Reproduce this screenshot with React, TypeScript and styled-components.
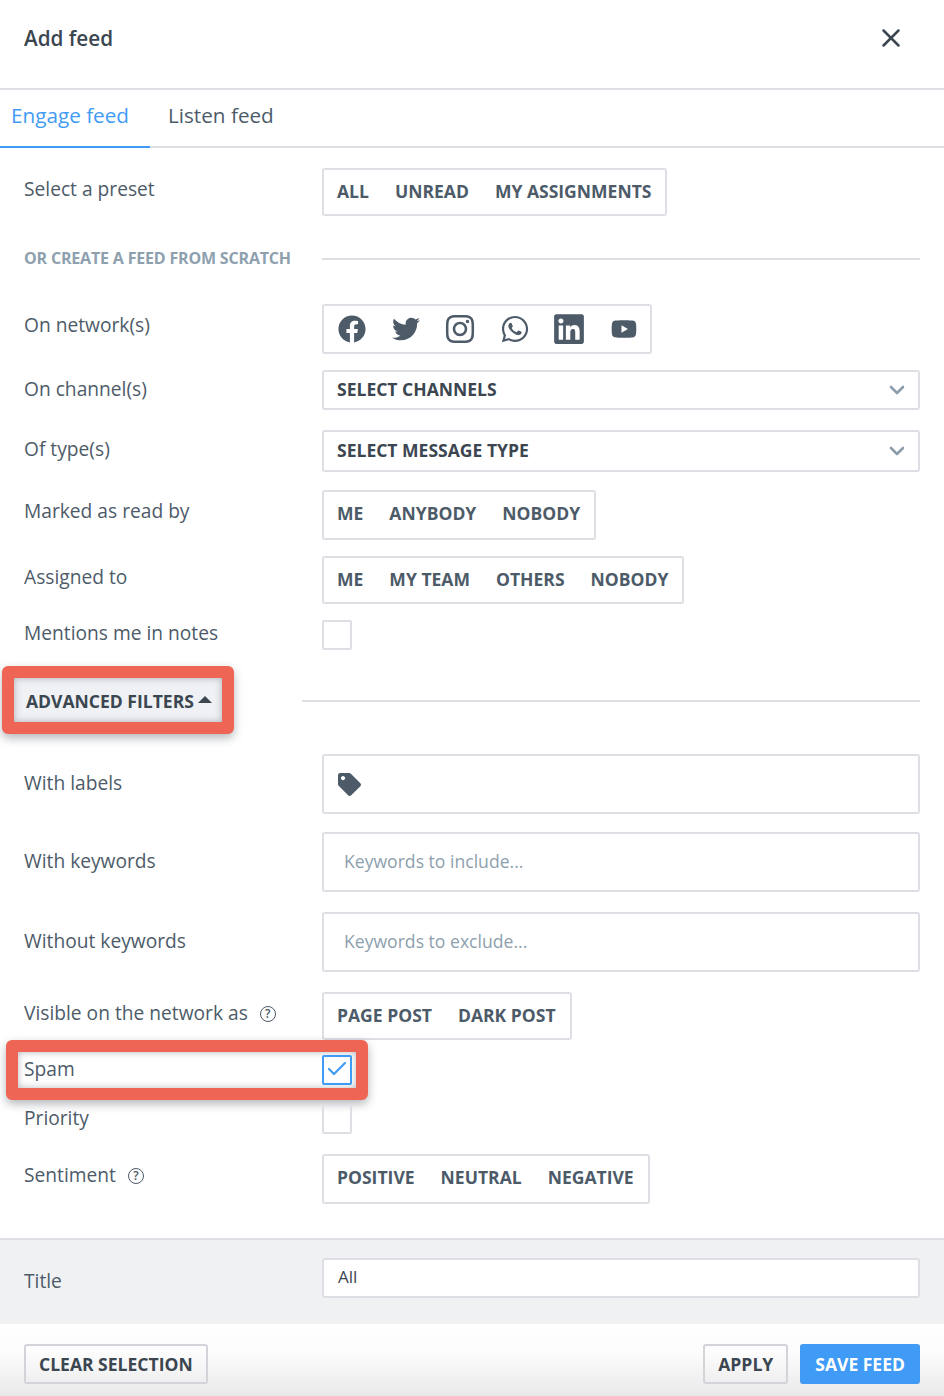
import React from "react";
import styled, { createGlobalStyle } from "styled-components";
import { FaFacebook, FaTwitter, FaWhatsapp, FaLinkedin, FaYoutube, FaTag } from "react-icons/fa";
import { AiOutlineInstagram } from "react-icons/ai";
import { X, ChevronDown, Check } from "lucide-react";

const Global = createGlobalStyle`
  html, body { margin: 0; padding: 0; background: #fff; }
  body { font-family: "Open Sans", "Noto Sans", sans-serif; color: #4d5b69; }
  * { box-sizing: border-box; }
`;

const Page = styled.div`
  width: 944px;
  height: 1396px;
  display: flex;
  flex-direction: column;
  overflow: hidden;
`;

const Header = styled.header`
  height: 90px;
  flex: none;
  border-bottom: 2px solid #dedfe5;
  display: flex;
  align-items: center;
  justify-content: space-between;
  padding: 0 24px 12px;
`;

const Title = styled.h1`
  margin: 0;
  font-size: 20.7px;
  font-weight: 600;
  color: #3b4650;
`;

const Close = styled.button`
  border: 0;
  background: none;
  padding: 0;
  width: 30px;
  height: 30px;
  margin-right: 14px;
  color: #3b4650;
  display: flex;
`;

const Tabs = styled.nav`
  height: 58px;
  flex: none;
  border-bottom: 2px solid #dedfe5;
  display: flex;
`;

const Tab = styled.div<{ $active?: boolean }>`
  height: 58px;
  padding: 0 ${(p) => (p.$active ? "21px" : "19px")} 7px ${(p) => (p.$active ? "11px" : "18px")};
  display: flex;
  align-items: center;
  font-size: 20.7px;
  color: ${(p) => (p.$active ? "#3f9bf5" : "#4d5b69")};
  border-bottom: 2px solid ${(p) => (p.$active ? "#3f9bf5" : "transparent")};
`;

const Body = styled.main`
  flex: 1;
  display: flex;
  flex-direction: column;
`;

const Row = styled.div<{ $top: number; $h: number }>`
  margin-top: ${(p) => p.$top}px;
  height: ${(p) => p.$h}px;
  padding: 0 24px;
  display: grid;
  grid-template-columns: 298px 1fr;
  flex: none;
`;

const Label = styled.div<{ $offset: number }>`
  padding-top: ${(p) => p.$offset}px;
  font-size: 19.2px;
  line-height: 26px;
  color: #4d5b69;
  display: flex;
  align-items: flex-start;
`;

const Help = styled.span`
  display: inline-flex;
  width: 16px;
  height: 16px;
  margin: 6px 0 0 12px;
  border: 1.7px solid #4d5b69;
  border-radius: 50%;
  font-size: 12px;
  line-height: 13px;
  font-weight: 600;
  justify-content: center;
`;

const Group = styled.div<{ $lift?: number }>`
  display: inline-flex;
  align-items: center;
  height: 100%;
  padding: 0 14px ${(p) => p.$lift ?? 2}px 13px;
  gap: 26px;
  border: 2px solid #dedfe5;
  border-radius: 3px;
  justify-self: start;
  font-size: 17.55px;
  font-weight: 700;
  color: #4d5b69;
  white-space: nowrap;
`;

const Networks = styled(Group)`
  padding: 0 13px 0 14px;
  gap: 26px;
  svg { display: block; color: #4d5b69; }
`;

const Select = styled.div`
  display: flex;
  align-items: center;
  justify-content: space-between;
  padding: 0 9px 0 13px;
  border: 2px solid #dedfe5;
  border-radius: 3px;
  font-size: 17.55px;
  font-weight: 700;
  color: #3b4650;
  span { margin-top: -3px; }
  svg { color: #8b9cab; margin-top: -1px; }
`;

const SectionRow = styled.div`
  margin-top: 30px;
  height: 26px;
  padding: 0 24px;
  display: grid;
  grid-template-columns: 298px 1fr;
  align-items: center;
  flex: none;
`;

const SectionTitle = styled.div`
  font-size: 16px;
  font-weight: 700;
  color: #8e9fae;
  white-space: nowrap;
  letter-spacing: -0.18px;
  margin-top: -2px;
`;

const Line = styled.div`
  height: 2px;
  background: #dedfe5;
`;

const AdvancedLine = styled(Line)`
  margin-top: 2px;
`;

const Box = styled.div<{ $checked?: boolean }>`
  width: 30px;
  height: 30px;
  border: 2px solid ${(p) => (p.$checked ? "#3f9bf5" : "#dedfe5")};
  border-radius: 2px;
  color: #3f9bf5;
  display: flex;
  align-items: center;
  justify-content: center;
  svg { margin-top: -2px; }
`;

const AdvancedRow = styled.div`
  margin-top: 16px;
  height: 68px;
  padding: 0 24px 0 2px;
  display: grid;
  grid-template-columns: 232px 1fr;
  column-gap: 68px;
  align-items: center;
  flex: none;
`;

const AdvancedFrame = styled.div`
  height: 68px;
  border: 12px solid #ee6555;
  border-radius: 6px;
  background: #eff1f4;
  box-shadow: 0 4px 10px rgba(40, 50, 60, 0.35), inset 0 0 7px rgba(40, 50, 60, 0.35);
  display: flex;
  align-items: center;
  padding: 2px 0 0 12px;
  gap: 4px;
  font-size: 17.55px;
  font-weight: 700;
  color: #3b4650;
  white-space: nowrap;
`;

const Caret = styled.span`
  width: 0;
  height: 0;
  border-left: 7px solid transparent;
  border-right: 7px solid transparent;
  border-bottom: 7px solid #3b4650;
  margin-bottom: 4px;
`;

const Field = styled.div`
  display: flex;
  align-items: center;
  padding: 0 20px 2px;
  border: 2px solid #dedfe5;
  border-radius: 3px;
  font-size: 17.6px;
  color: #8e9fae;
  svg { color: #4d5b69; margin-left: -6px; margin-top: 2px; }
`;

const SpamFrame = styled.div`
  margin: 0 0 0 6px;
  width: 362px;
  height: 60px;
  border: 12px solid #ee6555;
  border-radius: 6px;
  background: #fff;
  box-shadow: 0 4px 10px rgba(40, 50, 60, 0.35), inset 0 0 7px rgba(40, 50, 60, 0.35);
  display: flex;
  align-items: center;
  justify-content: space-between;
  padding: 0 4px 0 6px;
  flex: none;
  font-size: 19.2px;
  color: #4d5b69;
  span { margin-top: -4px; }
`;

const SpamRow = styled.div`
  margin-top: 0;
  display: flex;
  flex: none;
`;

const TitleBar = styled.section`
  margin-top: 34px;
  height: 86px;
  flex: none;
  background: #f0f1f3;
  border-top: 2px solid #dedfe5;
  padding: 18px 24px 0;
  display: grid;
  grid-template-columns: 298px 1fr;
`;

const TitleLabel = styled.div`
  padding-top: 10px;
  font-size: 19.2px;
  line-height: 26px;
`;

const TitleInput = styled.div`
  height: 40px;
  background: #fff;
  border: 2px solid #dedfe5;
  border-radius: 3px;
  padding: 0 14px 4px;
  display: flex;
  align-items: center;
  font-size: 17px;
  color: #3b4650;
`;

const Footer = styled.footer`
  flex: 1;
  background: linear-gradient(#fff 0%, #fcfcfc 40%, #e9e9eb 100%);
  padding: 20px 24px 0;
  display: flex;
  justify-content: space-between;
  align-items: flex-start;
`;

const Actions = styled.div`
  display: flex;
  gap: 12px;
`;

const Button = styled.button<{ $primary?: boolean }>`
  height: 40px;
  padding: 0 13px;
  border: 2px solid ${(p) => (p.$primary ? "#3f9bf5" : "#d3d4da")};
  border-radius: 3px;
  background: ${(p) => (p.$primary ? "#3f9bf5" : "transparent")};
  color: ${(p) => (p.$primary ? "#fff" : "#3b4650")};
  font-family: inherit;
  font-size: 17.55px;
  font-weight: 700;
`;

const igStyle = { margin: "0 -4px" };
const liStyle = { margin: "0 -1px 0 -4px" };

export default function App() {
  return (
    <Page>
      <Global />
      <Header>
        <Title>Add feed</Title>
        <Close aria-label="Close"><X size={30} strokeWidth={2} /></Close>
      </Header>
      <Tabs>
        <Tab $active>Engage feed</Tab>
        <Tab>Listen feed</Tab>
      </Tabs>
      <Body>
        <Row $top={20} $h={48}>
          <Label $offset={8}>Select a preset</Label>
          <Group><span>ALL</span><span>UNREAD</span><span>MY ASSIGNMENTS</span></Group>
        </Row>
        <SectionRow>
          <SectionTitle>OR CREATE A FEED FROM SCRATCH</SectionTitle>
          <Line />
        </SectionRow>
        <Row $top={32} $h={50}>
          <Label $offset={8}>On network(s)</Label>
          <Networks>
            <FaFacebook size={28} />
            <FaTwitter size={28} />
            <AiOutlineInstagram size={36} style={igStyle} />
            <FaWhatsapp size={30} />
            <FaLinkedin size={34} style={liStyle} />
            <FaYoutube size={26} />
          </Networks>
        </Row>
        <Row $top={16} $h={40}>
          <Label $offset={6}>On channel(s)</Label>
          <Select><span>SELECT CHANNELS</span><ChevronDown size={24} strokeWidth={2.6} /></Select>
        </Row>
        <Row $top={20} $h={42}>
          <Label $offset={6}>Of type(s)</Label>
          <Select><span>SELECT MESSAGE TYPE</span><ChevronDown size={24} strokeWidth={2.6} /></Select>
        </Row>
        <Row $top={18} $h={50}>
          <Label $offset={8}>Marked as read by</Label>
          <Group $lift={4}><span>ME</span><span>ANYBODY</span><span>NOBODY</span></Group>
        </Row>
        <Row $top={16} $h={48}>
          <Label $offset={8}>Assigned to</Label>
          <Group><span>ME</span><span>MY TEAM</span><span>OTHERS</span><span>NOBODY</span></Group>
        </Row>
        <Row $top={16} $h={30}>
          <Label $offset={0}>Mentions me in notes</Label>
          <Box />
        </Row>
        <AdvancedRow>
          <AdvancedFrame>ADVANCED FILTERS<Caret /></AdvancedFrame>
          <AdvancedLine />
        </AdvancedRow>
        <Row $top={20} $h={60}>
          <Label $offset={16}>With labels</Label>
          <Field><FaTag size={23} /></Field>
        </Row>
        <Row $top={18} $h={60}>
          <Label $offset={16}>With keywords</Label>
          <Field>Keywords to include...</Field>
        </Row>
        <Row $top={20} $h={60}>
          <Label $offset={16}>Without keywords</Label>
          <Field>Keywords to exclude...</Field>
        </Row>
        <Row $top={20} $h={48}>
          <Label $offset={8}>Visible on the network as<Help>?</Help></Label>
          <Group><span>PAGE POST</span><span>DARK POST</span></Group>
        </Row>
        <SpamRow>
          <SpamFrame>
            <span>Spam</span>
            <Box $checked><Check size={24} strokeWidth={2.2} /></Box>
          </SpamFrame>
        </SpamRow>
        <Row $top={4} $h={30}>
          <Label $offset={1}>Priority</Label>
          <Box />
        </Row>
        <Row $top={20} $h={50}>
          <Label $offset={8}>Sentiment<Help>?</Help></Label>
          <Group $lift={4}><span>POSITIVE</span><span>NEUTRAL</span><span>NEGATIVE</span></Group>
        </Row>
        <TitleBar>
          <TitleLabel>Title</TitleLabel>
          <TitleInput>All</TitleInput>
        </TitleBar>
        <Footer>
          <Button>CLEAR SELECTION</Button>
          <Actions>
            <Button>APPLY</Button>
            <Button $primary>SAVE FEED</Button>
          </Actions>
        </Footer>
      </Body>
    </Page>
  );
}
